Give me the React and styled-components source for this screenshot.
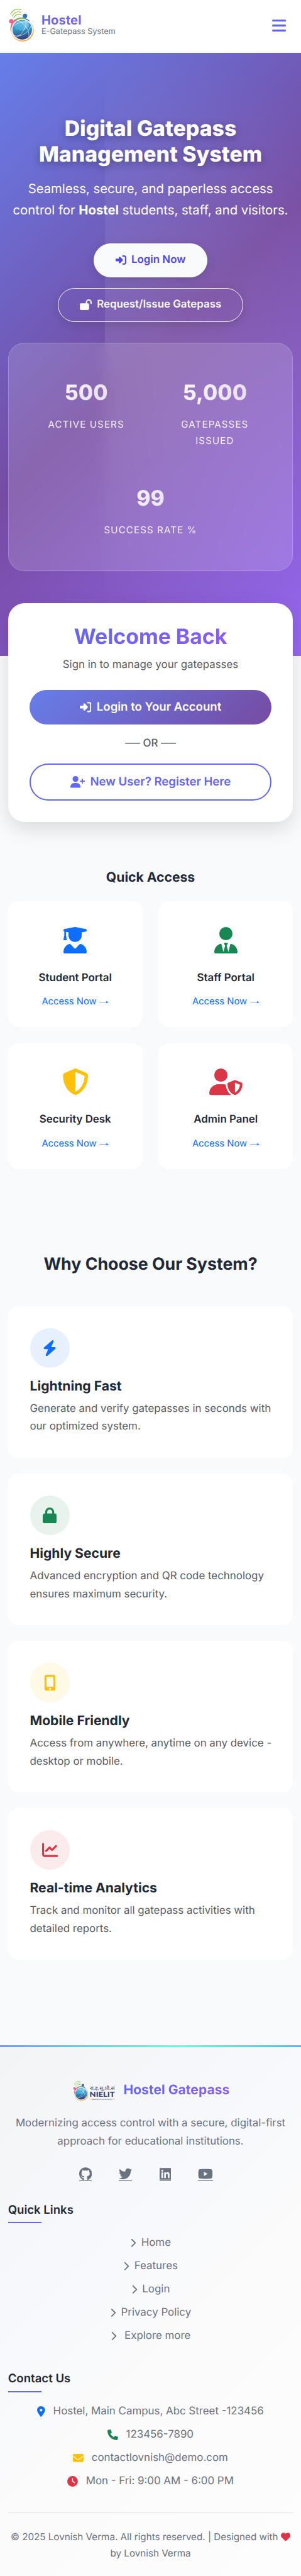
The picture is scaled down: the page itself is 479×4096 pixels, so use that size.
import React from "react";
import styled, { createGlobalStyle, css } from "styled-components";
import {
  FaBars, FaRightToBracket, FaLockOpen, FaUserPlus, FaUserGraduate, FaUserTie,
  FaShieldHalved, FaUserShield, FaBolt, FaLock, FaMobileScreenButton, FaChartLine,
  FaGithub, FaTwitter, FaLinkedin, FaYoutube, FaChevronRight, FaLocationDot,
  FaPhone, FaEnvelope, FaClock, FaHeart,
} from "react-icons/fa6";

// Converts design units to CSS pixels.
const u = (n) => `${+(n * 0.52797).toFixed(3)}px`;

const GlobalStyle = createGlobalStyle`
  *, *::before, *::after { box-sizing: border-box; }
  body {
    margin: 0;
    background: #f8fafc;
    color: #1f2937;
    font-family: Inter, "Liberation Sans", sans-serif;
    font-size: ${u(32)};
    line-height: 1.7;
    text-rendering: geometricPrecision;
    overflow-x: hidden;
  }
  h1, h2, h3, p, ul { margin: 0; padding: 0; }
  ul { list-style: none; }
  a { color: inherit; text-decoration: none; }
  svg { display: block; flex: none; }
`;

// Icons share a 512-unit height; $w is the width of the icon's own view box.
const Glyph = styled(({ of: Icon, className }) => <Icon className={className} />)`
  width: ${(p) => (p.$w || 512) / 512}em;
  height: 1em;
`;

const gradientText = css`
  background: linear-gradient(135deg, #6366f1 0%, #8b5cf6 100%);
  -webkit-background-clip: text;
  background-clip: text;
  color: transparent;
`;

const Header = styled.header`
  display: flex;
  justify-content: space-between;
  height: ${u(154)};
  margin-bottom: ${u(6)};
  padding: 0 ${u(46)} 0 ${u(24)};
  background: #fff;
`;
const Brand = styled.a`
  display: flex;
  align-items: flex-start;
`;
const BrandMark = styled.svg`
  width: ${u(80)};
  height: ${u(102)};
  margin-top: ${u(25)};
`;
const BrandText = styled.div`
  margin: ${u(37)} 0 0 ${u(21)};
`;
const BrandName = styled.div`
  ${gradientText}
  font-size: ${u(38.4)};
  line-height: ${u(46)};
  font-weight: 700;
`;
const BrandTag = styled.div`
  margin-top: ${u(1)};
  font-size: ${u(24)};
  line-height: ${u(28)};
  color: #6b7280;
`;
const MenuButton = styled.button`
  align-self: center;
  padding: 0;
  border: 0;
  background: none;
  color: #6366f1;
  font-size: ${u(48)};
  line-height: 1;
`;

const Hero = styled.section`
  position: relative;
  height: ${u(1816)};
  padding: ${u(191)} ${u(24)} 0;
  background: linear-gradient(135deg, #667eea 0%, #764ba2 50%, #9568f0 100%);
  color: #fff;
  text-align: center;
  &::before {
    content: "";
    position: absolute;
    inset: 0 0 0 ${u(315.5)};
    background: radial-gradient(circle ${u(850)} at ${u(140)} ${u(850)}, rgba(255, 255, 255, 0.115), transparent);
  }
`;
const HeroBody = styled.div`
  position: relative;
`;
const HeroTitle = styled.h1`
  font-size: ${u(64)};
  line-height: ${u(76.8)};
  font-weight: 800;
  text-shadow: 0 ${u(8)} ${u(24)} rgba(0, 0, 0, 0.3);
`;
const HeroLead = styled.p`
  margin: ${u(31)} ${u(-10)} 0;
  font-size: ${u(38.4)};
  line-height: ${u(65.3)};
  white-space: nowrap;
`;
const HeroActions = styled.div`
  display: flex;
  flex-direction: column;
  align-items: center;
  gap: ${u(32)};
  margin-top: ${u(66.4)};
`;
const PillButton = styled.a`
  display: flex;
  align-items: center;
  gap: ${u(16)};
  height: ${u(102.5)};
  padding: 0 ${u(64)};
  border: ${u(2)} solid #f8fafc;
  border-radius: ${u(100)};
  background: ${(p) => (p.$outline ? "transparent" : "#f8fafc")};
  color: ${(p) => (p.$outline ? "#f8fafc" : "#4f46e5")};
  font-weight: 600;
  box-shadow: 0 ${u(8)} ${u(30)} rgba(0, 0, 0, 0.13);
`;
const StatsPanel = styled.div`
  display: flex;
  flex-wrap: wrap;
  align-content: flex-start;
  justify-content: center;
  row-gap: ${u(112)};
  height: ${u(686)};
  margin-top: ${u(63.5)};
  padding: ${u(111)} ${u(40)} 0;
  border: ${u(2)} solid rgba(255, 255, 255, 0.2);
  border-radius: ${u(48)};
  background: rgba(255, 255, 255, 0.15);
  backdrop-filter: blur(${u(20)});
`;
const Stat = styled.div`
  width: 50%;
  padding: 0 ${u(32)};
`;
const StatValue = styled.div`
  font-size: ${u(64)};
  line-height: ${u(76.8)};
  font-weight: 800;
  background: linear-gradient(135deg, #fff 0%, rgba(255, 255, 255, 0.7) 100%);
  -webkit-background-clip: text;
  background-clip: text;
  color: transparent;
`;
const StatLabel = styled.div`
  margin-top: ${u(32)};
  font-size: ${u(28.8)};
  line-height: ${u(48.5)};
  letter-spacing: ${u(2)};
  text-transform: uppercase;
  opacity: 0.9;
`;

const LoginCard = styled.section`
  position: relative;
  height: ${u(659)};
  margin: ${u(-160)} ${u(24)} 0;
  padding: ${u(64)} ${u(65.5)} 0;
  border-radius: ${u(50)};
  background: #fff;
  box-shadow: 0 ${u(20)} ${u(60)} rgba(0, 0, 0, 0.13);
  text-align: center;
`;
const LoginTitle = styled.h2`
  ${gradientText}
  width: fit-content;
  margin: 0 auto;
  font-size: ${u(64)};
  line-height: ${u(76.8)};
  font-weight: 700;
`;
const LoginLead = styled.p`
  margin-top: ${u(18)};
  color: #595c5f;
`;
const WideButton = styled.a`
  display: flex;
  align-items: center;
  justify-content: center;
  gap: ${u(16)};
  height: ${(p) => u(p.$outline ? 110.5 : 105)};
  border: ${(p) => (p.$outline ? `${u(4)} solid #6366f1` : "0")};
  border-radius: ${u(100)};
  background: ${(p) => (p.$outline ? "#fff" : "linear-gradient(135deg, #667eea 0%, #764ba2 100%)")};
  color: ${(p) => (p.$outline ? "#6366f1" : "#fff")};
  font-size: ${u(35.2)};
  font-weight: 600;
`;
const LoginActions = styled.div`
  display: flex;
  flex-direction: column;
  margin-top: ${u(48)};
`;
const OrDivider = styled.div`
  margin: ${u(31)} 0 ${u(32.5)};
  color: #595c5f;
  font-weight: 500;
`;

const QuickSection = styled.section`
  padding: ${u(144)} ${u(24)} 0;
  text-align: center;
`;
const QuickTitle = styled.h2`
  font-size: ${u(40)};
  line-height: ${u(48)};
  font-weight: 700;
`;
const QuickGrid = styled.div`
  display: grid;
  grid-template-columns: 1fr 1fr;
  gap: ${u(48)};
  margin-top: ${u(47.5)};
`;
const QuickCard = styled.a`
  display: flex;
  flex-direction: column;
  align-items: center;
  height: ${u(379.5)};
  padding-top: ${u(77)};
  border-radius: ${u(32)};
  background: #fff;
`;
const QuickIcon = styled.div`
  font-size: ${u(80)};
  line-height: 1;
  color: ${(p) => p.$color};
`;
const QuickName = styled.h3`
  margin-top: ${u(54)};
  font-size: ${u(32)};
  line-height: ${u(38.4)};
  font-weight: 600;
`;
const QuickLink = styled.span`
  display: flex;
  align-items: baseline;
  gap: ${u(9)};
  margin-top: ${u(28.5)};
  font-size: ${u(28)};
  line-height: ${u(47.6)};
  color: #0d6efd;
`;
const LinkArrow = styled.span`
  width: 1em;
  font-family: "Liberation Sans", sans-serif;
  transform: translateY(-0.07em) scaleX(1.6);
`;

const Features = styled.section`
  padding: ${u(255)} ${u(24)} ${u(258)};
`;
const FeaturesTitle = styled.h2`
  font-size: ${u(50.6)};
  line-height: ${u(61.4)};
  font-weight: 700;
  text-align: center;
`;
const FeatureList = styled.div`
  display: grid;
  gap: ${u(48)};
  margin-top: ${u(96)};
`;
const FeatureCard = styled.article`
  height: ${u(456)};
  padding: ${u(66)} ${u(58)} 0 ${u(66)};
  border-radius: ${u(32)};
  background: #fff;
`;
const FeatureIcon = styled.div`
  display: flex;
  align-items: center;
  justify-content: center;
  width: ${u(120)};
  height: ${u(120)};
  border-radius: 50%;
  background: ${(p) => p.$tint};
  color: ${(p) => p.$color};
  font-size: ${u(48)};
`;
const FeatureName = styled.h3`
  margin-top: ${u(32)};
  font-size: ${u(40)};
  line-height: ${u(48)};
  font-weight: 700;
`;
const FeatureText = styled.p`
  margin-top: ${u(16)};
  color: #595c5f;
`;

const Footer = styled.footer`
  height: ${u(1598)};
  padding: 0 ${u(24)};
  background: linear-gradient(135deg, #f3f4f6 0%, #f8f9fc 40%, #fbfbfb 60%, #fdfdfd 100%);
  color: #6b7280;
`;
const FooterStrip = styled.div`
  height: ${u(6)};
  margin: 0 ${u(-24)};
  background: linear-gradient(90deg, #789be8 0%, #64ffda 59%, #5eb8e3 100%);
`;
const FooterBrand = styled.div`
  display: flex;
  align-items: center;
  justify-content: center;
  gap: ${u(24.5)};
  padding: ${u(99)} 0 0 ${u(4)};
`;
const InstituteLogo = styled.svg`
  width: ${u(128.3)};
  height: ${u(63.3)};
`;
const FooterName = styled.div`
  ${gradientText}
  font-size: ${u(40)};
  line-height: ${u(62)};
  font-weight: 700;
`;
const FooterLead = styled.p`
  margin-top: ${u(40)};
  text-align: center;
  white-space: nowrap;
`;
const SocialRow = styled.div`
  display: flex;
  justify-content: center;
  gap: ${u(82)};
  margin: ${u(49.5)} ${u(27)} 0 0;
`;
const SocialLink = styled.a`
  height: ${u(42)};
  border-bottom: ${u(3.4)} solid #6b7280;
  font-size: ${u(40)};
`;
const FooterHeading = styled.h3`
  display: flex;
  flex-direction: column;
  margin-top: ${(p) => u(p.$gap)};
  color: #1f2937;
  font-size: ${u(35.2)};
  line-height: ${u(42.2)};
  font-weight: 600;
  &::after {
    content: "";
    width: ${u(101)};
    height: ${u(4)};
    margin-top: ${u(16)};
    background: #6366f1;
  }
`;
const FooterList = styled.ul`
  display: grid;
  gap: ${u(16)};
  margin-top: ${u(31)};
`;
const FooterItem = styled.li`
  display: flex;
  align-items: center;
  justify-content: center;
  gap: ${(p) => u(p.$gap)};
  height: ${u(54.4)};
  white-space: pre;
`;
const ItemIcon = styled.span`
  display: flex;
  font-size: ${(p) => u(p.$size || 32)};
  color: ${(p) => p.$color || "inherit"};
`;
const Copyright = styled.p`
  margin-top: ${u(66)};
  padding-top: ${u(47.5)};
  border-top: ${u(2)} solid #dee2e6;
  font-size: ${u(28.8)};
  line-height: ${u(49.5)};
  text-align: center;
  white-space: nowrap;
  svg { display: inline-block; vertical-align: -0.125em; color: #dc3545; }
`;

function GlobeArt({ id }) {
  return (
    <>
      <defs>
        <linearGradient id={id} x1="0.5" y1="0" x2="0.6" y2="1">
          <stop offset="0" stopColor="#3a8fc4" />
          <stop offset="0.45" stopColor="#2e97c2" />
          <stop offset="0.75" stopColor="#37629b" />
          <stop offset="1" stopColor="#33406f" />
        </linearGradient>
        <linearGradient id={`${id}-shine`} x1="0" y1="1" x2="1" y2="0">
          <stop offset="0" stopColor="#3aa0cf" />
          <stop offset="1" stopColor="#86d2f5" />
        </linearGradient>
      </defs>
      <circle cx="199.5" cy="275" r="101" fill="#f79a33" />
      <g fill="none" stroke="#93c54b" strokeWidth="7" strokeLinecap="round">
        <path d="M93 128C108 92 146 76 186 90" />
        <path d="M107 147C122 113 152 100 186 113" />
        <path d="M121 162C132 136 155 125 186 134" />
      </g>
      <path d="M95 290C83 240 96 180 160 170C190 166 210 172 230 182L190 190C140 190 104 220 95 290Z" fill="#e4688a" />
      <path d="M128 180C160 158 190 152 226 166C244 173 258 182 270 196C230 174 180 168 128 180Z" fill="#3b70b0" />
      <path d="M130 180C160 158 210 156 236 176Z" fill="#93c54b" />
      <circle cx="98" cy="193" r="20" fill="#e4688a" />
      <circle cx="222" cy="145" r="20.5" fill="#3b70b0" />
      <circle cx="196.5" cy="270" r="97.5" fill="#fff" />
      <circle cx="197" cy="270" r="88.5" fill={`url(#${id})`} />
      <ellipse cx="191" cy="232" rx="68" ry="45" transform="rotate(-8 191 232)" fill={`url(#${id}-shine)`} opacity="0.9" />
      <g fill="none" stroke="#fff" strokeWidth="3.6">
        <path d="M112 244C150 204 215 190 268 206" />
        <path d="M160 188C220 212 264 268 258 338" />
        <path d="M229 188C240 240 204 306 140 342" />
        <path d="M276 236C254 296 192 336 126 324" />
      </g>
    </>
  );
}

const STATS = [
  ["500", "Active Users"],
  ["5,000", "Gatepasses Issued"],
  ["99", "Success Rate %"],
];
const PORTALS = [
  ["Student Portal", FaUserGraduate, 448, "#0d6efd"],
  ["Staff Portal", FaUserTie, 448, "#198754"],
  ["Security Desk", FaShieldHalved, 512, "#ffc107"],
  ["Admin Panel", FaUserShield, 640, "#dc3545"],
];
const FEATURES = [
  ["Lightning Fast", "Generate and verify gatepasses in seconds with our optimized system.", FaBolt, 448, "#0d6efd", "#e7f0ff"],
  ["Highly Secure", "Advanced encryption and QR code technology ensures maximum security.", FaLock, 448, "#198754", "#e8f3ee"],
  ["Mobile Friendly", "Access from anywhere, anytime on any device - desktop or mobile.", FaMobileScreenButton, 384, "#ffc107", "#fff9e6"],
  ["Real-time Analytics", "Track and monitor all gatepass activities with detailed reports.", FaChartLine, 512, "#dc3545", "#fbebec"],
];
const SOCIALS = [
  ["GitHub", FaGithub, 496],
  ["Twitter", FaTwitter, 512],
  ["LinkedIn", FaLinkedin, 448],
  ["YouTube", FaYoutube, 576],
];
const LINKS = ["Home", "Features", "Login", "Privacy Policy", " Explore more"];
const CONTACTS = [
  ["Hostel, Main Campus, Abc Street -123456", FaLocationDot, 384, "#0d6efd"],
  ["123456-7890", FaPhone, 512, "#198754"],
  ["contactlovnish@demo.com", FaEnvelope, 512, "#ffc107"],
  ["Mon - Fri: 9:00 AM - 6:00 PM", FaClock, 512, "#dc3545"],
];

export default function App() {
  return (
    <>
      <GlobalStyle />
      <Header>
        <Brand href="#">
          <BrandMark viewBox="70 75 240 306">
            <GlobeArt id="globe" />
          </BrandMark>
          <BrandText>
            <BrandName>Hostel</BrandName>
            <BrandTag>E-Gatepass System</BrandTag>
          </BrandText>
        </Brand>
        <MenuButton aria-label="Menu"><Glyph of={FaBars} $w={448} /></MenuButton>
      </Header>

      <Hero>
        <HeroBody>
          <HeroTitle>Digital Gatepass<br />Management System</HeroTitle>
          <HeroLead>
            Seamless, secure, and paperless access<br />
            control for <strong>Hostel</strong> students, staff, and visitors.
          </HeroLead>
          <HeroActions>
            <PillButton href="#"><Glyph of={FaRightToBracket} />Login Now</PillButton>
            <PillButton href="#" $outline><Glyph of={FaLockOpen} $w={576} />Request/Issue Gatepass</PillButton>
          </HeroActions>
          <StatsPanel>
            {STATS.map(([value, label]) => (
              <Stat key={label}>
                <StatValue>{value}</StatValue>
                <StatLabel>{label}</StatLabel>
              </Stat>
            ))}
          </StatsPanel>
        </HeroBody>
      </Hero>

      <LoginCard>
        <LoginTitle>Welcome Back</LoginTitle>
        <LoginLead>Sign in to manage your gatepasses</LoginLead>
        <LoginActions>
          <WideButton href="#"><Glyph of={FaRightToBracket} />Login to Your Account</WideButton>
          <OrDivider>── OR ──</OrDivider>
          <WideButton href="#" $outline><Glyph of={FaUserPlus} $w={640} />New User? Register Here</WideButton>
        </LoginActions>
      </LoginCard>

      <QuickSection>
        <QuickTitle>Quick Access</QuickTitle>
        <QuickGrid>
          {PORTALS.map(([name, Icon, width, color]) => (
            <QuickCard key={name} href="#">
              <QuickIcon $color={color}><Glyph of={Icon} $w={width} /></QuickIcon>
              <QuickName>{name}</QuickName>
              <QuickLink>Access Now <LinkArrow>→</LinkArrow></QuickLink>
            </QuickCard>
          ))}
        </QuickGrid>
      </QuickSection>

      <Features>
        <FeaturesTitle>Why Choose Our System?</FeaturesTitle>
        <FeatureList>
          {FEATURES.map(([name, text, Icon, width, color, tint]) => (
            <FeatureCard key={name}>
              <FeatureIcon $color={color} $tint={tint}><Glyph of={Icon} $w={width} /></FeatureIcon>
              <FeatureName>{name}</FeatureName>
              <FeatureText>{text}</FeatureText>
            </FeatureCard>
          ))}
        </FeatureList>
      </Features>

      <Footer>
        <FooterStrip />
        <FooterBrand>
          <InstituteLogo viewBox="60 105 385 190">
            <g transform="translate(15.7 61.5) scale(0.606)">
              <GlobeArt id="globe-small" />
            </g>
            <g fill="#343c74">
              <text x="213" y="190" fontSize="44" textLength="225" lengthAdjust="spacingAndGlyphs">रा.इ.सू.प्रौ.सं</text>
              <text x="211" y="253" fontSize="62" fontWeight="900" fontFamily="Lato" textLength="228" lengthAdjust="spacingAndGlyphs">NIELIT</text>
              <text x="234" y="279" fontSize="16" textLength="183" lengthAdjust="spacingAndGlyphs">Deemed to be University</text>
            </g>
            <path d="M213 274h18M420 274h18" stroke="#f79a33" strokeWidth="4" />
          </InstituteLogo>
          <FooterName>Hostel Gatepass</FooterName>
        </FooterBrand>
        <FooterLead>
          Modernizing access control with a secure, digital-first<br />
          approach for educational institutions.
        </FooterLead>
        <SocialRow>
          {SOCIALS.map(([name, Icon, width]) => (
            <SocialLink key={name} href="#" aria-label={name}><Glyph of={Icon} $w={width} /></SocialLink>
          ))}
        </SocialRow>

        <FooterHeading $gap={66}>Quick Links</FooterHeading>
        <FooterList>
          {LINKS.map((label) => (
            <FooterItem key={label} $gap={16}>
              <ItemIcon $size={28}><Glyph of={FaChevronRight} $w={320} /></ItemIcon>
              {label}
            </FooterItem>
          ))}
        </FooterList>

        <FooterHeading $gap={79}>Contact Us</FooterHeading>
        <FooterList>
          {CONTACTS.map(([label, Icon, width, color]) => (
            <FooterItem key={label} $gap={24}>
              <ItemIcon $color={color}><Glyph of={Icon} $w={width} /></ItemIcon>
              {label}
            </FooterItem>
          ))}
        </FooterList>

        <Copyright>
          © 2025 Lovnish Verma. All rights reserved. | Designed with <Glyph of={FaHeart} /><br />
          by Lovnish Verma
        </Copyright>
      </Footer>
    </>
  );
}
